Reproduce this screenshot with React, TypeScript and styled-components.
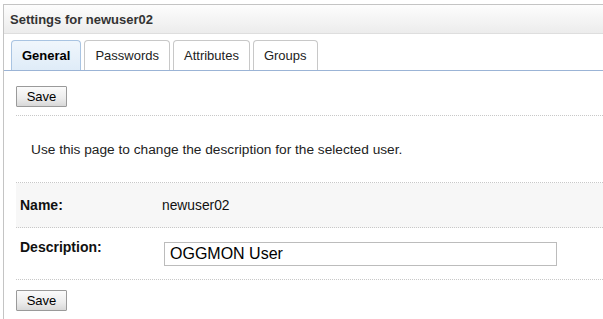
import React from 'react';
import styled, { createGlobalStyle } from 'styled-components';

const FONT = `"Liberation Sans", Arial, sans-serif`;

const GlobalStyle = createGlobalStyle`
  html, body {
    margin: 0;
    padding: 0;
    background: #fff;
  }
  body {
    font-family: ${FONT};
    font-size: 13px;
    color: #000;
  }
`;

const Panel = styled.div`
  margin: 4px 0 0 3px;
  width: 600px;
  height: 315px;
  border-top: 1px solid #c4c4c4;
  border-left: 1px solid #c4c4c4;
  box-sizing: border-box;
`;

const Header = styled.div`
  height: 28px;
  display: flex;
  align-items: center;
  padding-left: 6px;
  background: linear-gradient(#fdfdfd 0%, #f6f6f6 40%, #ececec 100%);
  border-bottom: 1px solid #dedede;
  font-weight: bold;
  font-size: 13px;
  color: #333;
`;

const TabBar = styled.div`
  display: flex;
  gap: 3px;
  padding: 6px 0 0 7px;
  border-bottom: 1px solid #9bb4d6;
`;

const Tab = styled.div<{ $active?: boolean }>`
  height: 30px;
  box-sizing: border-box;
  padding: 0 10px;
  display: flex;
  align-items: center;
  border: 1px solid ${p => (p.$active ? '#a9c4e2' : '#c8c8c8')};
  border-bottom: none;
  border-radius: 4px 4px 0 0;
  background: ${p => (p.$active ? 'linear-gradient(#f0f6fc, #dfecf8)' : '#fff')};
  font-weight: ${p => (p.$active ? 'bold' : 'normal')};
  font-size: 13px;
  color: ${p => (p.$active ? '#000' : '#222')};
`;

const Content = styled.div`
  padding: 0 0 0 12px;
`;

const ButtonRow = styled.div<{ $bottom?: boolean }>`
  padding: ${p => (p.$bottom ? '10px 0 0' : '15px 0 8px')};
  ${p => (p.$bottom ? '' : 'border-bottom: 1px dotted #c8c8c8;')}
`;

const Button = styled.button`
  width: 51px;
  height: 21px;
  padding: 0;
  border: 1px solid #9a9a9a;
  border-radius: 1px;
  background: linear-gradient(#fbfbfb 0%, #ececec 60%, #d8d8d8 100%);
  font-family: ${FONT};
  font-size: 13px;
  color: #000;
`;

const Intro = styled.div`
  padding: 26px 0 25px 15px;
  border-bottom: 1px dotted #c8c8c8;
  font-size: 13.7px;
  color: #222;
`;

const Row = styled.div<{ $shaded?: boolean; $tall?: boolean }>`
  display: flex;
  align-items: ${p => (p.$tall ? 'flex-start' : 'center')};
  height: ${p => (p.$tall ? '52px' : '45px')};
  box-sizing: border-box;
  padding-top: ${p => (p.$tall ? '11px' : '0')};
  background: ${p => (p.$shaded ? '#f7f7f7' : '#fff')};
  border-bottom: 1px dotted #c8c8c8;
`;

const Label = styled.div`
  width: 146px;
  padding-left: 4px;
  box-sizing: border-box;
  font-weight: bold;
  font-size: 14px;
  color: #111;
`;

const Value = styled.div`
  font-size: 13.8px;
  color: #111;
`;

const Input = styled.input`
  margin: 3px 0 0 2px;
  width: 393px;
  height: 24px;
  box-sizing: border-box;
  padding: 0 0 0 5px;
  border: 1px solid #bcbcbc;
  font-family: ${FONT};
  font-size: 16px;
  color: #000;
  outline: none;
`;

export default function App() {
  return (
    <>
      <GlobalStyle />
      <Panel>
        <Header>Settings for newuser02</Header>
        <TabBar>
          <Tab $active>General</Tab>
          <Tab>Passwords</Tab>
          <Tab>Attributes</Tab>
          <Tab>Groups</Tab>
        </TabBar>
        <Content>
          <ButtonRow>
            <Button>Save</Button>
          </ButtonRow>
          <Intro>Use this page to change the description for the selected user.</Intro>
          <Row $shaded>
            <Label>Name:</Label>
            <Value>newuser02</Value>
          </Row>
          <Row $tall>
            <Label>Description:</Label>
            <Input defaultValue="OGGMON User" />
          </Row>
          <ButtonRow $bottom>
            <Button>Save</Button>
          </ButtonRow>
        </Content>
      </Panel>
    </>
  );
}
